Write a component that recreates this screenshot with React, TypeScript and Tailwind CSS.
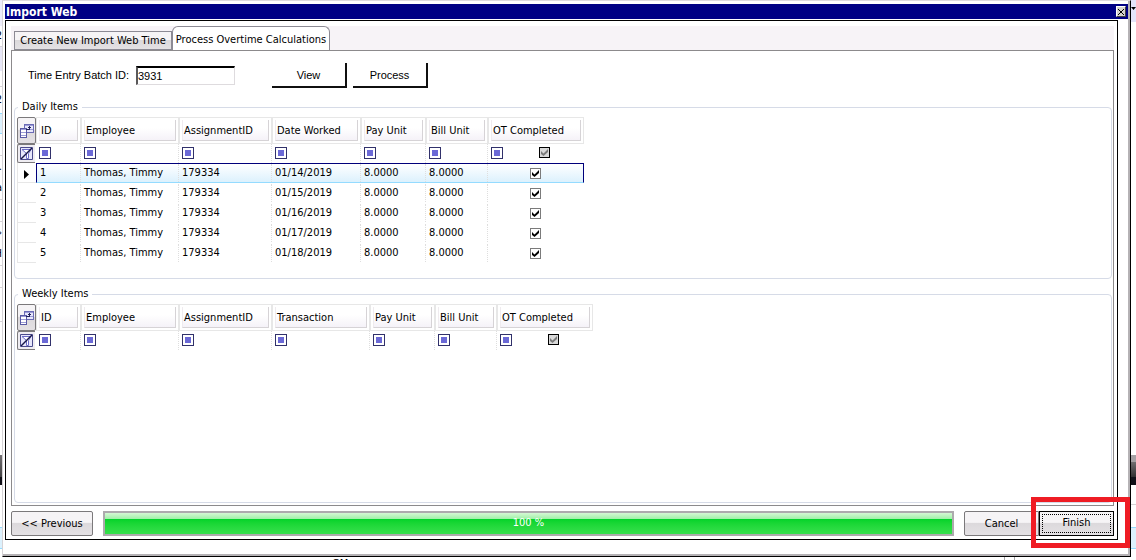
import React, { useState } from 'react';

interface Column {
  label: string;
  width: number;
}

interface DailyItem {
  id: number;
  employee: string;
  assignmentId: string;
  dateWorked: string;
  payUnit: string;
  billUnit: string;
  otCompleted: boolean;
}

const dailyColumns: Column[] = [
  { label: 'ID', width: 45 },
  { label: 'Employee', width: 98 },
  { label: 'AssignmentID', width: 93 },
  { label: 'Date Worked', width: 89 },
  { label: 'Pay Unit', width: 65 },
  { label: 'Bill Unit', width: 62 },
  { label: 'OT Completed', width: 96 },
];

const weeklyColumns: Column[] = [
  { label: 'ID', width: 45 },
  { label: 'Employee', width: 98 },
  { label: 'AssignmentID', width: 93 },
  { label: 'Transaction', width: 98 },
  { label: 'Pay Unit', width: 65 },
  { label: 'Bill Unit', width: 62 },
  { label: 'OT Completed', width: 96 },
];

const dailyItems: DailyItem[] = ['14', '15', '16', '17', '18'].map((day, i) => ({
  id: i + 1,
  employee: 'Thomas, Timmy',
  assignmentId: '179334',
  dateWorked: `01/${day}/2019`,
  payUnit: '8.0000',
  billUnit: '8.0000',
  otCompleted: true,
}));

// rows of the main window that show past the dialog's left edge
const leftSliver = [
  { h: 26, cls: 'bg-[#ededfb]', text: '' },
  { h: 21, cls: 'border-b border-[#d6d3d6]', text: '2' },
  { h: 24, cls: 'bg-[#e7e7f7]', text: '' },
  { h: 16, cls: 'border-b border-[#d6d3d6]', text: '' },
  { h: 26, cls: '', text: '2' },
  { h: 21, cls: 'border-y border-[#94dbff] bg-[#dcf1fd]', text: '' },
  { h: 22, cls: 'border-b border-[#d6d3d6]', text: '' },
  { h: 22, cls: '', text: '.' },
  { h: 22, cls: 'border-b border-[#d6d3d6]', text: 'a' },
  { h: 22, cls: 'border-b border-[#d6d3d6]', text: '' },
  { h: 22, cls: '', text: '»' },
  { h: 22, cls: 'border-b border-[#d6d3d6]', text: 'H' },
  { h: 22, cls: 'border-b border-[#d6d3d6]', text: '' },
  { h: 34, cls: 'border-b border-[#d6d3d6]', text: '' },
];

const glossy = 'bg-linear-to-b from-[#f6f4f6] from-45% via-[#dcd9dc] via-50% to-[#e4e1e4]';

const FieldChooserIcon: React.FC = () => (
  <svg width="14" height="14" viewBox="0 0 14 14" shapeRendering="crispEdges" fill="none">
    <path d="M4.5 0.5h9v8h-9z" fill="#e7e7fb" stroke="#6b6bb5" />
    <path d="M5 1.5h8M5 5.5h8" stroke="#9c9cd6" />
    <path d="M0.5 4.5h6v9h-6z" fill="#fff" stroke="#5a5aa5" />
    <path d="M1 5.5h5M1 8.5h5M1 11.5h5" stroke="#9c9cd6" />
    <path d="M6 5.5h3.5V2M8 3.5h3" stroke="#21215a" />
  </svg>
);

const ClearFilterIcon: React.FC = () => (
  <svg width="13" height="13" viewBox="0 0 13 13" fill="none">
    <path d="M0.5 0.5h12v12H.5z" fill="#e7e7fb" stroke="#4a4a8c" />
    <path d="M2 2.5h9L8.5 6.5v5h-2v-5z" fill="#fff" stroke="#6b6bc6" />
    <path d="M1 12L12 1" stroke="#18184a" strokeWidth="1.5" />
  </svg>
);

interface CheckProps {
  label: string;
  checked: boolean;
  mixed?: boolean;
  onChange: () => void;
}

const Check: React.FC<CheckProps> = ({ label, checked, mixed, onChange }) => (
  <span className="grid size-[11px] place-items-center">
    <input
      type="checkbox"
      aria-label={label}
      checked={checked}
      onChange={onChange}
      className={`col-start-1 row-start-1 size-[11px] appearance-none border ${
        mixed ? 'border-black bg-[#d9d9d9]' : 'border-[#7b7b7b] bg-white'
      }`}
    />
    {checked && (
      <svg width="7" height="7" viewBox="0 0 7 7" className="pointer-events-none col-start-1 row-start-1">
        <path d="M0 2l2.5 2.5L7 0v3L2.5 7 0 5z" fill={mixed ? '#7b7b7b' : '#000'} />
      </svg>
    )}
  </span>
);

interface GridProps {
  name: string;
  columns: Column[];
  children?: React.ReactNode;
}

const ItemGrid: React.FC<GridProps> = ({ name, columns, children }) => {
  const [filter, setFilter] = useState(true);
  const last = columns.length - 1;

  return (
    <table aria-label={name} className="table-fixed border-separate border-spacing-0">
      <colgroup>
        <col className="w-[19px]" />
        {columns.map((c) => (
          <col key={c.label} style={{ width: c.width }} />
        ))}
      </colgroup>
      <thead>
        <tr className="h-[27px]">
          <td className="p-0">
            <button
              aria-label="Field chooser"
              className={`flex h-[27px] w-[19px] items-center justify-center rounded-xs border border-[#7b797b] ${glossy}`}
            >
              <FieldChooserIcon />
            </button>
          </td>
          {columns.map((c) => (
            <th key={c.label} className="border border-[#e7e7e7] p-0 font-normal">
              <div className="m-[2px] h-[21px] border-r border-b border-l border-r-[#d6d3d6] border-b-[#d6d3d6] border-l-[#efebef] bg-linear-to-b from-white from-40% to-[#f5f2f8] pl-px text-left leading-[22px]">
                {c.label}
              </div>
            </th>
          ))}
        </tr>
        <tr className="h-[19px]">
          <td className="p-0">
            <button
              aria-label="Clear filters"
              className="flex h-[19px] w-[18px] items-center justify-center rounded-l-xs border border-r-0 border-[#7b797b] bg-[#efedf2]"
            >
              <ClearFilterIcon />
            </button>
          </td>
          {columns.map((c, i) => (
            <td
              key={c.label}
              className={`p-0 pb-0.5 pl-[3px] ${i < last ? 'border-r border-dotted border-[#dedede]' : ''}`}
            >
              <div className="flex items-center">
                <button
                  aria-label={`Filter ${c.label}`}
                  className="flex size-3 items-center justify-center border border-[#31316b] bg-white"
                >
                  <span className="size-1.5 bg-[#6b69d6]" />
                </button>
                {i === last && (
                  <div className="ml-9">
                    <Check label="OT Completed filter" checked={filter} mixed onChange={() => setFilter(!filter)} />
                  </div>
                )}
              </div>
            </td>
          ))}
        </tr>
      </thead>
      <tbody>{children}</tbody>
    </table>
  );
};

const DailyRows: React.FC = () => {
  const [items, setItems] = useState(dailyItems);
  const [selected, setSelected] = useState(1);

  const toggle = (id: number) => {
    setItems(items.map((it) => (it.id === id ? { ...it, otCompleted: !it.otCompleted } : it)));
  };

  return (
    <>
      {items.map((it) => {
        const active = it.id === selected;
        const cell = active
          ? 'border-t border-b border-t-[#00007b] border-b-[#94dbff] bg-linear-to-b from-white to-[#dcf1fd]'
          : 'border-y border-transparent';
        const values = [it.id, it.employee, it.assignmentId, it.dateWorked, it.payUnit, it.billUnit];
        return (
          <tr key={it.id} className="h-5" onClick={() => setSelected(it.id)}>
            <td className="border-b border-l border-[#e7e7e7] p-0">
              {active && (
                <svg width="5" height="9" viewBox="0 0 5 9" className="mt-[3px] ml-[6px]">
                  <path d="M0 0l5 4.5L0 9z" />
                </svg>
              )}
            </td>
            {values.map((v, i) => (
              <td
                key={i}
                className={`p-0 ${cell} ${active && i === 0 ? 'border-l border-l-[#00007b]' : ''}`}
              >
                <div
                  className={`h-[18px] border-r border-dotted border-[#dedede] leading-[17px] ${
                    i === 0 && !active ? 'pl-1' : 'pl-[3px]'
                  }`}
                >
                  {v}
                </div>
              </td>
            ))}
            <td className={`p-0 ${cell} ${active ? 'border-r border-r-[#00007b]' : ''}`}>
              <div className="flex justify-center pr-px">
                <Check label={`OT completed ${it.dateWorked}`} checked={it.otCompleted} onChange={() => toggle(it.id)} />
              </div>
            </td>
          </tr>
        );
      })}
    </>
  );
};

const App: React.FC = () => {
  const [batchId, setBatchId] = useState('3931');

  return (
    <div className="flex min-h-screen flex-col bg-white font-['DejaVu_Sans_Condensed','DejaVu_Sans',sans-serif] text-[11px] text-black">
      <div className="flex flex-1">
        <div className="flex w-0.5 flex-col overflow-hidden" aria-hidden="true">
          {leftSliver.map((row, i) => (
            <div key={i} className={`flex items-center justify-end ${row.cls}`} style={{ height: row.h }}>
              {row.text}
            </div>
          ))}
          <div className="flex-1" />
          <div className="h-[22px] bg-linear-to-b from-[#737173] to-[#424142]" />
          <div className="h-2 bg-[#101018]" />
          <div className="mt-[42px] mb-2 h-[22px] border-y border-[#94dbff] bg-[#dcf1fd]" />
        </div>

        <div className="flex flex-1 flex-col border-t border-r border-b border-l border-t-[#dedbde] border-r-black border-b-black border-l-[#d6d3d6]">
          <div className="flex flex-1 flex-col border-r-2 border-b-2 border-[#b5b2b5] pt-[3px] pl-0.5">
            <div className="flex h-[15px] items-center justify-between bg-[#000084] pr-0.5 pl-px text-white">
              <h1 className="text-[12px] font-bold">Import Web</h1>
              <button
                aria-label="Close"
                className="flex h-[11px] w-2.5 items-center justify-center border border-t-white border-r-[#424142] border-b-[#424142] border-l-white bg-[#d6d3ce]"
              >
                <svg width="6" height="6" viewBox="0 0 6 6">
                  <path d="M0 0l6 6M6 0L0 6" stroke="#000" />
                </svg>
              </button>
            </div>

            <div className="mt-px mr-[10px] mb-[14px] flex flex-1 flex-col border border-black p-[5px] pr-[3px] pb-[3px]">
              <div role="tablist" className="flex h-6 items-end bg-[#f7f3f7] pl-[3px]">
                <button
                  role="tab"
                  aria-selected={false}
                  className={`h-[19px] w-[158px] border border-[#8c8a94] leading-none whitespace-nowrap ${glossy}`}
                >
                  Create New Import Web Time
                </button>
                <button
                  role="tab"
                  aria-selected
                  className="-mb-px h-[25px] w-[158px] rounded-t-md border border-b-0 border-[#8c8a94] bg-white pt-[3px] whitespace-nowrap"
                >
                  Process Overtime Calculations
                </button>
              </div>

              <div className="flex flex-1 flex-col border border-[#8c8a8c] pr-px pb-0.5 pl-0.5">
                <div className="flex items-center pt-3 pl-[14px] font-['Liberation_Sans',Arial,sans-serif]">
                  <label htmlFor="batch" className="w-[108px]">
                    Time Entry Batch ID:
                  </label>
                  <input
                    id="batch"
                    value={batchId}
                    onChange={(e) => setBatchId(e.target.value)}
                    className="h-[19px] w-[99px] border-t-2 border-r border-b border-l-2 border-t-black border-r-[#dedbde] border-b-[#dedbde] border-l-[#5a595a] bg-white outline-none"
                  />
                  <button className="ml-[37px] h-[25px] w-[75px] border-r-2 border-b-2 border-[#101010] bg-white pt-px">
                    View
                  </button>
                  <button className="ml-1.5 h-[25px] w-[75px] border-r-2 border-b-2 border-[#101010] bg-white pt-px">
                    Process
                  </button>
                </div>

                <fieldset className="mt-3 h-[179px] rounded-sm border border-[#d6dbe7] pl-0.5">
                  <legend className="ml-px px-1 leading-[14px]">Daily Items</legend>
                  <div className="pt-[3px]">
                    <ItemGrid name="Daily Items" columns={dailyColumns}>
                      <DailyRows />
                    </ItemGrid>
                  </div>
                </fieldset>

                <fieldset className="mt-2 flex-1 rounded-sm border border-[#d6dbe7] pl-0.5">
                  <legend className="ml-px px-1 leading-[14px]">Weekly Items</legend>
                  <div className="pt-[3px]">
                    <ItemGrid name="Weekly Items" columns={weeklyColumns} />
                  </div>
                </fieldset>
              </div>

              <div className="mt-[5px] flex h-[25px]">
                <button className={`w-[82px] rounded-xs border border-[#7b797b] pt-px ${glossy}`}>&lt;&lt; Previous</button>
                <div
                  role="progressbar"
                  aria-label="Import progress"
                  aria-valuenow={100}
                  className="mx-[10px] flex flex-1 border-2 border-[#adaaad] bg-linear-to-b from-[#d4f8d4] to-[#a0f0a8] to-28% text-white"
                >
                  <div className="flex flex-1 items-center justify-center bg-linear-to-b from-transparent from-28% via-[#00d329] via-28% to-[#35e04c]">
                    100 %
                  </div>
                </div>
                <button className={`w-[75px] rounded-l-xs border border-[#7b797b] pt-px ${glossy}`}>Cancel</button>
                <div className="relative flex w-[75px]">
                  <button className={`flex-1 border border-black p-0.5 ${glossy}`}>
                    <span className="flex h-full items-center justify-center border border-dotted border-black">Finish</span>
                  </button>
                  <div className="pointer-events-none absolute -top-[14px] -right-4 -bottom-3 -left-2 border-5 border-[#ef1c24]" />
                </div>
              </div>
            </div>
          </div>
        </div>

        <div className="flex w-[5px] flex-col overflow-hidden" aria-hidden="true">
          <div className="h-[22px] bg-[#e4e4fa] pt-[7px]">
            <svg width="5" height="3" viewBox="0 0 5 3">
              <path d="M0 0h5L2.5 3z" />
            </svg>
          </div>
          <div className="flex-1" />
          <div className="h-[22px] bg-linear-to-b from-[#a5a2a5] from-30% via-[#737173] via-30% to-[#313031]" />
          <div className="h-2 bg-[#101018]" />
          <div className="h-5 border-b border-[#d6d3d6]" />
          <div className="mt-[22px] mb-2 h-[22px] border-y border-[#94dbff] bg-[#dcf1fd]" />
        </div>
      </div>

      <div className="flex h-[3px] justify-between overflow-hidden pr-[121px] pl-[332px]" aria-hidden="true">
        <span className="leading-[13px]">GM</span>
        <span className="w-[11px] border-x border-[#a5a2a5]" />
      </div>
    </div>
  );
};

export default App;
